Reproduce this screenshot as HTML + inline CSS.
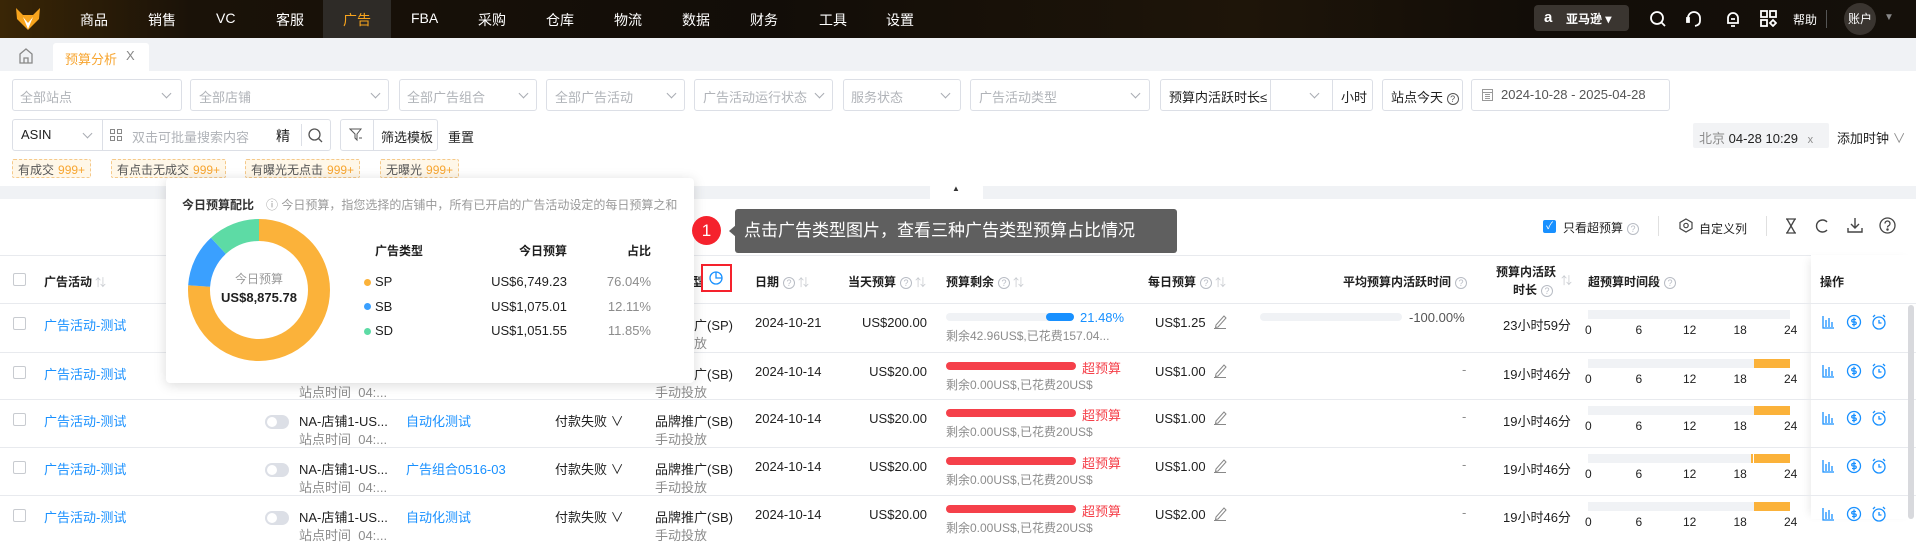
<!DOCTYPE html>
<html><head><meta charset="utf-8"><style>
*{box-sizing:border-box;margin:0;padding:0}
body{width:1916px;height:519px;overflow:hidden;background:#fff;font-family:"Liberation Sans","Noto Sans CJK SC",sans-serif;font-size:13px;color:#1f1f1f;position:relative}
.a{position:absolute;white-space:nowrap}
.nav{left:0;top:0;width:1916px;height:38px;background:linear-gradient(90deg,#3a2606 0%,#1a1208 10%,#120d08 40%,#1e1509 65%,#120d08 80%,#15100a 100%)}
.ni{color:#fff;font-size:14px;top:10px}
.box{border:1px solid #dcdfe6;border-radius:3px;height:32px;background:#fff}
.ph{color:#b0b3b8;font-size:13px;top:8px}
.chev{width:7px;height:7px;border-right:1px solid #a8abb2;border-bottom:1px solid #a8abb2;transform:rotate(45deg)}
.tag{top:159px;height:19px;border:1px dashed #f5c98a;background:#fff7e8;border-radius:2px;font-size:12px;color:#555;padding:1px 5px}
.tag b{font-weight:normal;color:#f7a530;margin-left:4px}
.hd{font-weight:bold;font-size:12px;color:#1f1f1f}
.q{display:inline-block;width:12px;height:12px;border:1px solid #b8bcc4;border-radius:50%;font-size:9px;line-height:10px;text-align:center;color:#b8bcc4;font-weight:normal;vertical-align:middle;margin-left:4px}
.so{color:#c8cbd0;font-weight:normal;margin-left:3px;font-size:11px}
.line{height:1px;background:#e8eaee;left:0;width:1916px}
.blue{color:#1890ff}
.g{color:#8c8c8c}
.cb{width:13px;height:13px;border:1px solid #c8cbd0;border-radius:2px;background:#fff}
.tg{width:24px;height:14px;border-radius:7px;background:#dcdfe6}
.tg:after{content:"";position:absolute;left:2px;top:2px;width:10px;height:10px;border-radius:50%;background:#fff}
.tl{height:9px;background:#f0f2f5;width:202px;left:1588px}
.tn{font-size:12px}
</style></head><body>

<div class="a nav"></div>
<svg class="a" style="left:15px;top:7px" width="26" height="24" viewBox="0 0 26 24"><path d="M1 1 L8 8 L18 8 L25 1 L24 12 L13 23 L2 12 Z" fill="#f7a41d"/><path d="M8 10 L13 16 L18 10 L13 22 Z" fill="#fff"/></svg>
<div class="a" style="left:323px;top:0;width:68px;height:38px;background:#2e2b27"></div>
<div class="a ni" style="left:80px">商品</div>
<div class="a ni" style="left:148px">销售</div>
<div class="a ni" style="left:216px">VC</div>
<div class="a ni" style="left:276px">客服</div>
<div class="a ni" style="left:343px;color:#f7a41d">广告</div>
<div class="a ni" style="left:411px">FBA</div>
<div class="a ni" style="left:478px">采购</div>
<div class="a ni" style="left:546px">仓库</div>
<div class="a ni" style="left:614px">物流</div>
<div class="a ni" style="left:682px">数据</div>
<div class="a ni" style="left:750px">财务</div>
<div class="a ni" style="left:819px">工具</div>
<div class="a ni" style="left:886px">设置</div>
<div class="a" style="left:1534px;top:5px;width:95px;height:26px;background:#3a3530;border-radius:4px"></div>
<div class="a" style="left:1544px;top:9px;color:#fff;font-size:15px;font-weight:bold">a</div>
<div class="a" style="left:1566px;top:10px;color:#fff;font-size:12px;font-weight:bold">亚马逊 ▾</div>
<svg class="a" style="left:1649px;top:10px" width="18" height="18" viewBox="0 0 18 18" fill="none" stroke="#fff" stroke-width="1.8"><circle cx="8" cy="8" r="6"/><path d="M12.5 12.5 L16 16"/></svg>
<svg class="a" style="left:1685px;top:10px" width="18" height="18" viewBox="0 0 18 18" fill="none" stroke="#fff" stroke-width="1.8"><path d="M3 11 V8 a6 6 0 0 1 12 0 V11"/><path d="M15 11 q0 4 -5 5"/><rect x="2" y="8" width="2" height="4" fill="#fff"/></svg>
<svg class="a" style="left:1724px;top:10px" width="18" height="18" viewBox="0 0 18 18" fill="none" stroke="#fff" stroke-width="1.8"><path d="M4 13 V8 a5 5 0 0 1 10 0 V13 Z"/><path d="M7 16 h4 M7 9 h4"/></svg>
<svg class="a" style="left:1760px;top:10px" width="17" height="17" viewBox="0 0 17 17" fill="none" stroke="#fff" stroke-width="1.8"><rect x="1" y="1" width="6" height="6"/><rect x="10" y="1" width="6" height="6"/><rect x="1" y="10" width="6" height="6"/><path d="M13 10 L16 13 L13 16 L10 13 Z"/></svg>
<div class="a" style="left:1793px;top:11px;color:#fff;font-size:12px">帮助</div>
<div class="a" style="left:1826px;top:10px;width:1px;height:18px;background:#555"></div>
<div class="a" style="left:1844px;top:3px;width:32px;height:32px;border-radius:50%;background:#3a3530;color:#fff;font-size:12px;text-align:center;line-height:32px">账户</div>
<div class="a" style="left:1884px;top:12px;color:#888;font-size:10px">▼</div>

<!-- tab bar -->
<div class="a" style="left:0;top:38px;width:1916px;height:33px;background:#f0f2f5"></div>
<svg class="a" style="left:18px;top:47px" width="16" height="17" viewBox="0 0 16 17" fill="none" stroke="#888" stroke-width="1.3"><path d="M2 7 L8 2 L14 7 V16 H2 Z M6 16 V11 H10 V16"/></svg>
<div class="a" style="left:53px;top:43px;width:96px;height:28px;background:#fff;border-radius:3px 3px 0 0"></div>
<div class="a" style="left:65px;top:49px;color:#f7a530;font-size:13px">预算分析</div>
<div class="a" style="left:126px;top:48px;color:#888;font-size:13px">X</div>

<!-- filter row 1 -->
<div class="a box" style="left:12px;top:79px;width:170px"></div><div class="a ph" style="left:20px;top:87px">全部站点</div><div class="a chev" style="left:163px;top:90px"></div>
<div class="a box" style="left:190px;top:79px;width:199px"></div><div class="a ph" style="left:199px;top:87px">全部店铺</div><div class="a chev" style="left:372px;top:90px"></div>
<div class="a box" style="left:399px;top:79px;width:138px"></div><div class="a ph" style="left:407px;top:87px">全部广告组合</div><div class="a chev" style="left:520px;top:90px"></div>
<div class="a box" style="left:546px;top:79px;width:139px"></div><div class="a ph" style="left:555px;top:87px">全部广告活动</div><div class="a chev" style="left:668px;top:90px"></div>
<div class="a box" style="left:694px;top:79px;width:139px"></div><div class="a ph" style="left:703px;top:87px">广告活动运行状态</div><div class="a chev" style="left:816px;top:90px"></div>
<div class="a box" style="left:843px;top:79px;width:118px"></div><div class="a ph" style="left:851px;top:87px">服务状态</div><div class="a chev" style="left:942px;top:90px"></div>
<div class="a box" style="left:970px;top:79px;width:180px"></div><div class="a ph" style="left:979px;top:87px">广告活动类型</div><div class="a chev" style="left:1132px;top:90px"></div>
<div class="a box" style="left:1160px;top:79px;width:213px"></div><div class="a" style="left:1169px;top:87px">预算内活跃时长≤</div>
<div class="a" style="left:1270px;top:80px;width:1px;height:30px;background:#dcdfe6"></div><div class="a chev" style="left:1311px;top:90px"></div>
<div class="a" style="left:1332px;top:80px;width:1px;height:30px;background:#dcdfe6"></div><div class="a" style="left:1341px;top:87px">小时</div>
<div class="a box" style="left:1382px;top:79px;width:81px"></div><div class="a" style="left:1391px;top:87px">站点今天 <span class="q" style="color:#555;border-color:#555;margin-left:0">?</span></div>
<div class="a box" style="left:1471px;top:79px;width:199px"></div>
<svg class="a" style="left:1482px;top:88px" width="11" height="13" viewBox="0 0 11 13" fill="none" stroke="#999"><rect x="0.5" y="1.5" width="10" height="11"/><path d="M0.5 4.5 H10.5 M3 6.5 H8 M3 8.5 H8 M3 10.5 H8"/></svg>
<div class="a" style="left:1501px;top:87px;color:#555">2024-10-28 - 2025-04-28</div>

<!-- row 2 -->
<div class="a box" style="left:12px;top:119px;width:319px"></div>
<div class="a" style="left:21px;top:127px">ASIN</div><div class="a chev" style="left:84px;top:130px"></div>
<div class="a" style="left:102px;top:120px;width:1px;height:30px;background:#dcdfe6"></div>
<svg class="a" style="left:110px;top:129px" width="12" height="12" viewBox="0 0 12 12" fill="none" stroke="#888"><rect x="0.5" y="0.5" width="4" height="4"/><rect x="7.5" y="0.5" width="4" height="4"/><rect x="0.5" y="7.5" width="4" height="4"/><rect x="7.5" y="7.5" width="4" height="4"/></svg>
<div class="a ph" style="left:132px;top:127px">双击可批量搜索内容</div>
<div class="a" style="left:276px;top:126px;font-size:14px">精</div>
<div class="a" style="left:301px;top:124px;width:1px;height:22px;background:#dcdfe6"></div>
<svg class="a" style="left:308px;top:128px" width="15" height="15" viewBox="0 0 15 15" fill="none" stroke="#555" stroke-width="1.3"><circle cx="6.5" cy="6.5" r="5.5"/><path d="M10.5 10.5 L14 14"/></svg>
<div class="a box" style="left:340px;top:119px;width:98px"></div>
<svg class="a" style="left:349px;top:128px" width="14" height="14" viewBox="0 0 14 14" fill="none" stroke="#555"><path d="M1 1 H12 L8 6 V12 L6 10 V6 Z"/><path d="M10 10 h3"/></svg>
<div class="a" style="left:373px;top:120px;width:1px;height:30px;background:#dcdfe6"></div>
<div class="a" style="left:381px;top:127px">筛选模板</div>
<div class="a" style="left:448px;top:127px">重置</div>
<div class="a" style="left:1693px;top:123px;width:136px;height:25px;background:#f2f3f5;border-radius:2px"></div>
<div class="a" style="left:1699px;top:128px"><span class="g">北京</span> 04-28 10:29 <span class="g" style="font-size:11px;margin-left:6px">x</span></div>
<div class="a" style="left:1837px;top:128px">添加时钟 <span class="g">∨</span></div>

<!-- tags -->
<div class="a tag" style="left:12px">有成交<b>999+</b></div>
<div class="a tag" style="left:111px">有点击无成交<b>999+</b></div>
<div class="a tag" style="left:245px">有曝光无点击<b>999+</b></div>
<div class="a tag" style="left:380px">无曝光<b>999+</b></div>

<!-- gray band -->
<div class="a" style="left:0;top:186px;width:1916px;height:13px;background:#f0f2f5"></div>
<div class="a" style="left:930px;top:183px;width:53px;height:16px;background:#fff;border-radius:4px 4px 0 0"></div>
<div class="a" style="left:952px;top:184px;font-size:8px;color:#333">▲</div>

<!-- toolbar -->
<div class="a" style="left:1543px;top:220px;width:13px;height:13px;background:#1890ff;border-radius:2px;color:#fff;font-size:10px;line-height:13px;text-align:center">✓</div>
<div class="a" style="left:1563px;top:219px;font-size:12px">只看超预算<span class="q">?</span></div>
<div class="a" style="left:1658px;top:216px;width:1px;height:20px;background:#e0e0e0"></div>
<svg class="a" style="left:1679px;top:218px" width="14" height="15" viewBox="0 0 14 15" fill="none" stroke="#444" stroke-width="1.2"><path d="M7 1 L13 4.5 V10.5 L7 14 L1 10.5 V4.5 Z"/><circle cx="7" cy="7.5" r="2.2"/></svg>
<div class="a" style="left:1699px;top:220px;font-size:12px">自定义列</div>
<div class="a" style="left:1766px;top:216px;width:1px;height:20px;background:#e0e0e0"></div>
<svg class="a" style="left:1784px;top:218px" width="14" height="16" viewBox="0 0 14 16" fill="none" stroke="#444" stroke-width="1.3"><path d="M2 1 H12 M2 15 H12 M3 1 L11 15 M11 1 L3 15"/></svg>
<svg class="a" style="left:1815px;top:218px" width="14" height="16" viewBox="0 0 14 16" fill="none" stroke="#444" stroke-width="1.4"><path d="M12 4 A6 6 0 1 0 12 12"/></svg>
<svg class="a" style="left:1847px;top:217px" width="16" height="17" viewBox="0 0 16 17" fill="none" stroke="#444" stroke-width="1.4"><path d="M8 1 V11 M4 7 L8 11 L12 7 M1 11 V15 H15 V11"/></svg>
<svg class="a" style="left:1879px;top:217px" width="17" height="17" viewBox="0 0 17 17" fill="none" stroke="#444" stroke-width="1.3"><circle cx="8.5" cy="8.5" r="7.5"/><path d="M6 6.5 a2.5 2.5 0 1 1 3.5 2.3 c-0.8 0.4 -1 0.8 -1 1.7"/><circle cx="8.5" cy="12.5" r="0.6" fill="#444"/></svg>

<!-- table header -->
<div class="a line" style="top:255px"></div>
<div class="a cb" style="left:13px;top:273px"></div>
<div class="a hd" style="left:44px;top:273px">广告活动<span class="so">⇅</span></div>
<div class="a hd" style="left:655px;top:273px">广告类型</div>
<div class="a" style="left:701px;top:264px;width:31px;height:28px;border:2px solid #f5222d;background:#fff"></div>
<svg class="a" style="left:709px;top:271px" width="14" height="14" viewBox="0 0 14 14" fill="none" stroke="#1890ff" stroke-width="1.3"><circle cx="7" cy="7" r="6"/><path d="M7 1 V7 H13"/></svg>
<div class="a hd" style="left:755px;top:273px">日期<span class="q">?</span><span class="so">⇅</span></div>
<div class="a hd" style="left:848px;top:273px">当天预算<span class="q">?</span><span class="so">⇅</span></div>
<div class="a hd" style="left:946px;top:273px">预算剩余<span class="q">?</span><span class="so">⇅</span></div>
<div class="a hd" style="left:1148px;top:273px">每日预算<span class="q">?</span><span class="so">⇅</span></div>
<div class="a hd" style="left:1343px;top:273px">平均预算内活跃时间<span class="q">?</span></div>
<div class="a hd" style="left:1496px;top:263px">预算内活跃</div>
<div class="a hd" style="left:1513px;top:281px">时长<span class="q">?</span></div>
<div class="a so" style="left:1558px;top:272px">⇅</div>
<div class="a hd" style="left:1588px;top:273px">超预算时间段<span class="q">?</span></div>
<div class="a" style="left:1811px;top:255px;width:105px;height:264px;background:#fff;box-shadow:-6px 0 8px -4px rgba(0,0,0,0.08)"></div>
<div class="a hd" style="left:1820px;top:273px">操作</div>
<div class="a line" style="top:303px"></div>
<div class="a line" style="top:352px"></div>
<div class="a line" style="top:399px"></div>
<div class="a line" style="top:447px"></div>
<div class="a line" style="top:495px"></div>
<div class="a" style="left:1908px;top:305px;width:6px;height:214px;background:#d8d9dd;border-radius:3px"></div>

<!-- rows -->
<div id="rows"></div>
<script>
var tops=[303,352,399,447,495];
var h='';
tops.forEach(function(t,i){
 var y=t+12,y2=t+30;
 h+='<div class="a cb" style="left:13px;top:'+(t+14)+'px"></div>';
 h+='<div class="a blue" style="left:44px;top:'+y+'px">广告活动-测试</div>';
 h+='<div class="a tg" style="left:265px;top:'+(t+16)+'px"></div>';
 h+='<div class="a" style="left:299px;top:'+y+'px">NA-店铺1-US...</div>';
 h+='<div class="a g" style="left:299px;top:'+y2+'px">站点时间&nbsp; 04:...</div>';
 h+='<div class="a blue" style="left:406px;top:'+y+'px">'+(i==3?'广告组合0516-03':'自动化测试')+'</div>';
 h+='<div class="a" style="left:555px;top:'+y+'px">付款失败 ∨</div>';
 h+='<div class="a" style="left:655px;top:'+y+'px">'+(i==0?'商品推广(SP)':'品牌推广(SB)')+'</div>';
 h+='<div class="a g" style="left:655px;top:'+y2+'px">'+(i==0?'自动投放':'手动投放')+'</div>';
 h+='<div class="a" style="left:755px;top:'+y+'px">'+(i==0?'2024-10-21':'2024-10-14')+'</div>';
 h+='<div class="a" style="right:989px;top:'+y+'px">'+(i==0?'US$200.00':'US$20.00')+'</div>';
 if(i==0){
  h+='<div class="a" style="left:946px;top:'+(t+10)+'px;width:128px;height:8px;background:#f0f2f5;border-radius:4px"></div>';
  h+='<div class="a" style="left:1046px;top:'+(t+10)+'px;width:28px;height:8px;background:#1890ff;border-radius:4px"></div>';
  h+='<div class="a blue" style="left:1080px;top:'+(t+7)+'px">21.48%</div>';
  h+='<div class="a g" style="left:946px;top:'+(t+24)+'px;font-size:12px">剩余42.96US$,已花费157.04...</div>';
  h+='<div class="a" style="left:1260px;top:'+(t+10)+'px;width:142px;height:8px;background:#f0f2f5;border-radius:4px"></div>';
  h+='<div class="a g" style="left:1409px;top:'+(t+7)+'px;color:#555">-100.00%</div>';
 } else {
  h+='<div class="a" style="left:946px;top:'+(t+10)+'px;width:130px;height:8px;background:#f5404a;border-radius:4px"></div>';
  h+='<div class="a" style="left:1082px;top:'+(t+6)+'px;color:#f5404a">超预算</div>';
  h+='<div class="a g" style="left:946px;top:'+(t+24)+'px;font-size:12px">剩余0.00US$,已花费20US$</div>';
  h+='<div class="a g" style="left:1462px;top:'+(t+10)+'px">-</div>';
 }
 h+='<div class="a" style="left:1155px;top:'+y+'px">'+['US$1.25','US$1.00','US$1.00','US$1.00','US$2.00'][i]+'</div>';
 h+='<svg class="a" style="left:1213px;top:'+(t+11)+'px" width="14" height="15" viewBox="0 0 14 15" fill="none" stroke="#888"><path d="M3 11 L11 2 L13 4 L5 13 L2.5 13.5 Z M1 14.5 H13"/></svg>';
 h+='<div class="a" style="left:1503px;top:'+y+'px">'+(i==0?'23小时59分':'19小时46分')+'</div>';
 h+='<div class="a tl" style="top:'+(t+7)+'px"></div>';
 if(i>0){h+='<div class="a" style="left:'+(i==3?1751:1754)+'px;top:'+(t+7)+'px;width:'+(i==3?39:36)+'px;height:9px;background:#fbb23a"></div>';}
 if(i==3){h+='<div class="a" style="left:1753px;top:'+(t+7)+'px;width:1px;height:9px;background:#fff"></div>';}
 [0,6,12,18,24].forEach(function(n,k){h+='<div class="a tn" style="left:'+(1588+k*50.5-(n>9?6:3))+'px;top:'+(t+20)+'px">'+n+'</div>';});
 h+='<svg class="a" style="left:1822px;top:'+(t+11)+'px" width="68" height="16" viewBox="0 0 68 16" fill="none" stroke="#1890ff" stroke-width="1.3"><path d="M1 2 V14 H12 M4 13 V6 M7 13 V4 M10 13 V8"/><circle cx="32" cy="8" r="6.5"/><path d="M34 5.5 h-3 a1.2 1.2 0 0 0 0 2.5 h2 a1.2 1.2 0 0 1 0 2.5 h-3 M32 3.5 V12.5"/><circle cx="57" cy="9" r="6"/><path d="M57 6 V9 H59.5 M51 3 L53 1 M63 3 L61 1"/></svg>';
});
document.getElementById('rows').innerHTML=h;
</script>

<!-- popup -->
<div class="a" style="left:166px;top:178px;width:528px;height:205px;background:#fff;border-radius:4px;box-shadow:0 2px 12px rgba(0,0,0,0.15)"></div>
<div class="a" style="left:182px;top:196px;font-size:12px;font-weight:bold;color:#333">今日预算配比</div>
<div class="a" style="left:266px;top:196px;font-size:12px;color:#999">ⓘ 今日预算，指您选择的店铺中，所有已开启的广告活动设定的每日预算之和</div>
<svg class="a" style="left:187px;top:218px" width="144" height="144" viewBox="0 0 144 144">
<g transform="rotate(-90 72 72)" fill="none" stroke-width="22">
<circle cx="72" cy="72" r="60" stroke="#fbb23a" stroke-dasharray="286.7 377" stroke-dashoffset="0"/>
<circle cx="72" cy="72" r="60" stroke="#3aa0ff" stroke-dasharray="45.6 377" stroke-dashoffset="-286.7"/>
<circle cx="72" cy="72" r="60" stroke="#5ddba5" stroke-dasharray="44.7 377" stroke-dashoffset="-332.3"/>
</g></svg>
<div class="a" style="left:259px;top:270px;transform:translateX(-50%);color:#999;font-size:12px">今日预算</div>
<div class="a" style="left:259px;top:290px;transform:translateX(-50%);font-weight:bold;font-size:13px">US$8,875.78</div>
<div class="a hd" style="left:375px;top:242px">广告类型</div>
<div class="a hd" style="right:1349px;top:242px">今日预算</div>
<div class="a hd" style="right:1265px;top:242px">占比</div>
<div class="a" style="left:364px;top:279px;width:7px;height:7px;border-radius:50%;background:#fbb23a"></div>
<div class="a" style="left:364px;top:303px;width:7px;height:7px;border-radius:50%;background:#3aa0ff"></div>
<div class="a" style="left:364px;top:328px;width:7px;height:7px;border-radius:50%;background:#5ddba5"></div>
<div class="a" style="left:375px;top:274px">SP</div><div class="a" style="right:1349px;top:274px">US$6,749.23</div><div class="a g" style="right:1265px;top:274px">76.04%</div>
<div class="a" style="left:375px;top:299px">SB</div><div class="a" style="right:1349px;top:299px">US$1,075.01</div><div class="a g" style="right:1265px;top:299px">12.11%</div>
<div class="a" style="left:375px;top:323px">SD</div><div class="a" style="right:1349px;top:323px">US$1,051.55</div><div class="a g" style="right:1265px;top:323px">11.85%</div>

<!-- tooltip -->
<div class="a" style="left:692px;top:216px;width:29px;height:29px;border-radius:50%;background:#f5222d;color:#fff;font-size:17px;text-align:center;line-height:29px">1</div>
<div class="a" style="left:729px;top:225px;width:0;height:0;border-top:6px solid transparent;border-bottom:6px solid transparent;border-right:7px solid #5f5f5f"></div>
<div class="a" style="left:735px;top:209px;width:442px;height:44px;background:#5f5f5f;border-radius:3px;color:#fff;font-size:17px;line-height:44px;padding-left:9px">点击广告类型图片，查看三种广告类型预算占比情况</div>
</body></html>
